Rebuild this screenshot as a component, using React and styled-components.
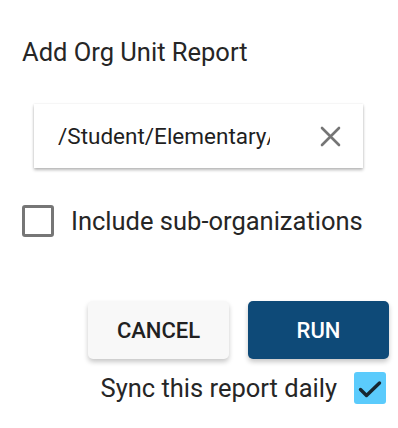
import React, { useState } from "react";
import styled, { createGlobalStyle } from "styled-components";

const GlobalStyle = createGlobalStyle`
  body {
    margin: 0;
    background: #ffffff;
    font-family: Roboto, "Liberation Sans", sans-serif;
    color: #212121;
  }
`;

const Dialog = styled.div`
  width: 398px;
  height: 428px;
  box-sizing: border-box;
  padding: 36px 9px 0 22px;
  display: flex;
  flex-direction: column;
`;

const Title = styled.h2`
  margin: 0;
  font-size: 25.5px;
  font-weight: 400;
  line-height: 32px;
  color: #262626;
`;

const Field = styled.div`
  margin: 36px 0 0 12px;
  width: 329px;
  height: 64px;
  box-sizing: border-box;
  padding: 0 22px 0 24px;
  display: flex;
  align-items: center;
  background: #fff;
  box-shadow: 0 2px 3px rgba(0, 0, 0, 0.28), 0 0 2px rgba(0, 0, 0, 0.08);
`;

const FieldText = styled.input`
  flex: 1;
  min-width: 0;
  margin-right: 50px;
  border: none;
  outline: none;
  padding: 0;
  font-family: inherit;
  font-size: 22.5px;
  color: #1f1f1f;
  background: transparent;
`;

const ClearButton = styled.button`
  border: none;
  background: none;
  padding: 0;
  width: 21px;
  height: 21px;
  display: flex;
  cursor: pointer;
`;

const CheckRow = styled.label`
  margin-top: 37px;
  display: flex;
  align-items: center;
  gap: 17px;
  font-size: 25.5px;
  color: #262626;
  cursor: pointer;
`;

const Box = styled.span`
  width: 32px;
  height: 32px;
  box-sizing: border-box;
  border-radius: 3px;
  display: flex;
  align-items: center;
  justify-content: center;
  border: ${(p) => (p.checked ? "none" : "3px solid #767676")};
  background: ${(p) => (p.checked ? "#5bcbfc" : "transparent")};
  flex-shrink: 0;
`;

const Buttons = styled.div`
  margin-top: 64px;
  display: flex;
  justify-content: flex-end;
  gap: 19px;
`;

const Button = styled.button`
  width: 141px;
  height: 58px;
  border: none;
  border-radius: 5px;
  font-family: inherit;
  font-size: 22px;
  font-weight: 500;
  cursor: pointer;
  background: ${(p) => (p.primary ? "#0e4a78" : "#f8f8f8")};
  color: ${(p) => (p.primary ? "#ffffff" : "#212121")};
  box-shadow: 0 3px 5px rgba(0, 0, 0, 0.22);
`;

const SyncRow = styled.label`
  margin-top: 13px;
  padding-right: 3px;
  display: flex;
  justify-content: flex-end;
  align-items: center;
  gap: 17px;
  font-size: 25.5px;
  color: #262626;
  cursor: pointer;
`;

const Check = () => (
  <svg width="32" height="32" viewBox="0 0 32 32">
    <path
      d="M6.5 17.5l6 6L25.5 11"
      fill="none"
      stroke="#172630"
      strokeWidth="3.4"
      strokeLinecap="round"
      strokeLinejoin="round"
    />
  </svg>
);

const App = () => {
  const [path, setPath] = useState("/Student/Elementary/");
  const [includeSubs, setIncludeSubs] = useState(false);
  const [sync, setSync] = useState(true);

  return (
    <>
      <GlobalStyle />
      <Dialog>
        <Title>Add Org Unit Report</Title>
        <Field>
          <FieldText value={path} onChange={(e) => setPath(e.target.value)} />
          <ClearButton onClick={() => setPath("")}>
            <svg width="21" height="21" viewBox="0 0 21 21">
              <path
                d="M2 2L19 19M19 2L2 19"
                stroke="#757575"
                strokeWidth="2.6"
                strokeLinecap="round"
              />
            </svg>
          </ClearButton>
        </Field>
        <CheckRow onClick={() => setIncludeSubs(!includeSubs)}>
          <Box checked={includeSubs}>{includeSubs && <Check />}</Box>
          Include sub-organizations
        </CheckRow>
        <Buttons>
          <Button>CANCEL</Button>
          <Button primary>RUN</Button>
        </Buttons>
        <SyncRow onClick={() => setSync(!sync)}>
          Sync this report daily
          <Box checked={sync}>{sync && <Check />}</Box>
        </SyncRow>
      </Dialog>
    </>
  );
};

export default App;
